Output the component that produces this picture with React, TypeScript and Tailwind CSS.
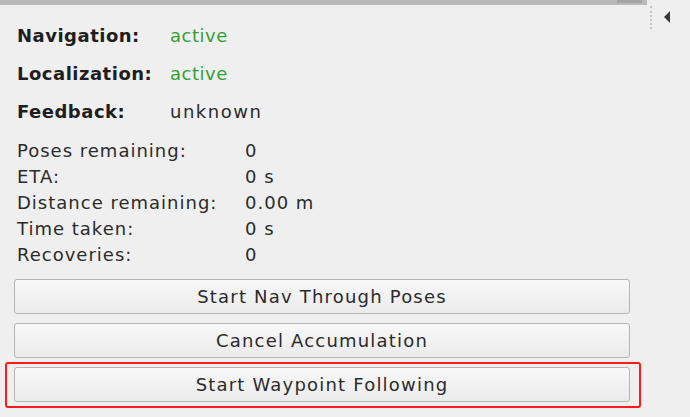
import React from "react";

const FONT = { fontFamily: '"DejaVu Sans", "Open Sans", sans-serif' };

const STATUS = [
  { label: "Navigation:", value: "active", ok: true },
  { label: "Localization:", value: "active", ok: true },
  { label: "Feedback:", value: "unknown", ok: false },
];

const DETAILS = [
  ["Poses remaining:", "0"],
  ["ETA:", "0 s"],
  ["Distance remaining:", "0.00 m"],
  ["Time taken:", "0 s"],
  ["Recoveries:", "0"],
];

function QtButton({ children }: { children: React.ReactNode }) {
  return (
    <button className="w-[616px] h-[35px] rounded-[3px] border border-[#b5b5b5] bg-gradient-to-b from-[#f8f8f8] to-[#ebebeb] text-[18px] tracking-[1.2px] text-[#2b2b2b] flex items-center justify-center">
      {children}
    </button>
  );
}

export default function App() {
  return (
    <div className="w-[690px] h-[417px] bg-[#efefef] flex overflow-hidden relative" style={FONT}>
      {/* panel */}
      <div className="w-[647px] flex flex-col">
        <div className="h-[5px] bg-[#b9b9b9] flex justify-end pr-[5px]">
          <div className="w-[25px] h-[3px] bg-[#a3a3a3]" />
        </div>
        <div className="pl-[17px] pt-[11px]">
          {STATUS.map(s => (
            <div key={s.label} className="h-[38px] flex items-center text-[18px]">
              <span className="w-[153px] font-bold tracking-[0.5px] text-[#1e1e1e]">{s.label}</span>
              <span className={s.ok ? "text-[#35a035] tracking-[0.5px]" : "text-[#2b2b2b] tracking-[1.5px]"}>{s.value}</span>
            </div>
          ))}
          <div className="mt-[7px]">
            {DETAILS.map(([k, v]) => (
              <div key={k} className="h-[26px] flex items-center text-[18px] tracking-[1px] text-[#2b2b2b]">
                <span className="w-[228px]">{k}</span>
                <span>{v}</span>
              </div>
            ))}
          </div>
        </div>
        <div className="pl-[14px] mt-[12px] flex flex-col gap-[9px]">
          <QtButton>Start Nav Through Poses</QtButton>
          <QtButton>Cancel Accumulation</QtButton>
          <QtButton>Start Waypoint Following</QtButton>
        </div>
      </div>
      {/* side strip */}
      <div className="flex-1 flex pt-[6px]">
        <div className="ml-[3px] h-[23px] border-l-2 border-dotted border-[#c4c4c4]" />
        <svg width="8" height="12" viewBox="0 0 8 12" className="ml-[11px] mt-[5px]">
          <polygon points="7,0 7,12 1,6" fill="#3a3a3a" />
        </svg>
      </div>
      {/* annotation */}
      <div className="absolute left-[5px] top-[362px] w-[636px] h-[46px] border-2 border-[#ff1a1a] rounded-[3px] pointer-events-none" />
    </div>
  );
}
